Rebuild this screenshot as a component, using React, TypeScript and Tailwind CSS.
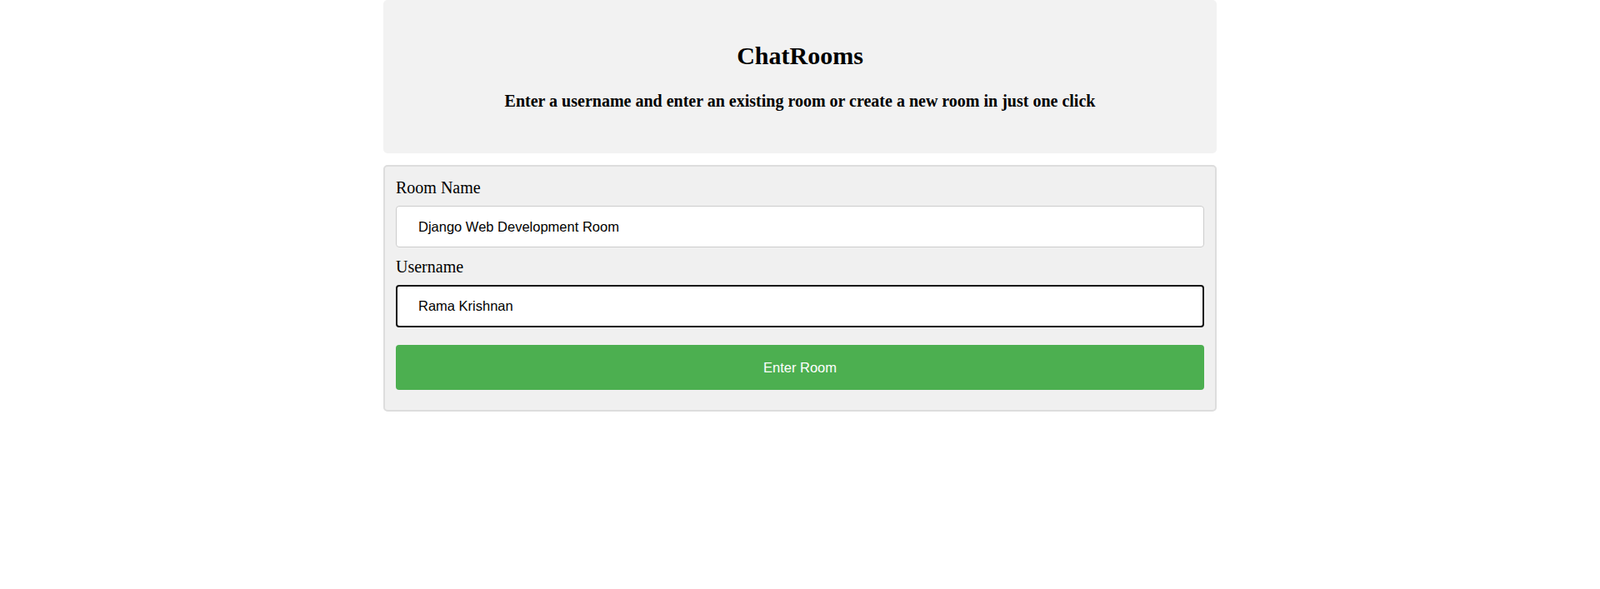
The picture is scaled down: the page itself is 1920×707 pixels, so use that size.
import React from 'react';

const App: React.FC = () => {
  return (
    <div className="min-h-[707px] bg-white">
      <div className="w-[1000px] mx-auto">
        <div className="bg-[#f2f2f2] rounded-[5px] pt-[50px] pb-[52px] text-center font-['Liberation_Serif','Times_New_Roman',serif] text-black">
          <h1 className="text-[30px] leading-[34px] font-bold">ChatRooms</h1>
          <h3 className="mt-[26px] text-[20px] leading-[22px] font-bold">
            Enter a username and enter an existing room or create a new room in just one click
          </h3>
        </div>

        <form
          className="mt-[14px] bg-[#f0f0f0] border-2 border-[#dddddd] rounded-[5px] px-[13px] pt-[14px] pb-[24px]"
          onSubmit={(e) => e.preventDefault()}
        >
          <label className="block text-[20px] leading-[22px] text-black font-['Liberation_Serif','Times_New_Roman',serif]">
            Room Name
          </label>
          <input
            type="text"
            defaultValue="Django Web Development Room"
            className="mt-[11px] block w-full h-[50px] bg-white border border-[#cccccc] rounded-[4px] pl-[26px] text-[16.5px] text-black font-['Liberation_Sans',Arial,sans-serif] outline-none"
          />

          <label className="mt-[12px] block text-[20px] leading-[22px] text-black font-['Liberation_Serif','Times_New_Roman',serif]">
            Username
          </label>
          <input
            type="text"
            defaultValue="Rama Krishnan"
            className="mt-[11px] block w-full h-[51px] bg-white border-2 border-[#101010] rounded-[4px] pl-[25px] text-[16.5px] text-black font-['Liberation_Sans',Arial,sans-serif] outline-none"
          />

          <button
            type="submit"
            className="mt-[21px] flex items-center justify-center w-full h-[54px] bg-[#4caf50] rounded-[4px] text-white text-[16.5px] font-['Liberation_Sans',Arial,sans-serif]"
          >
            Enter Room
          </button>
        </form>
      </div>
    </div>
  );
};

export default App;
